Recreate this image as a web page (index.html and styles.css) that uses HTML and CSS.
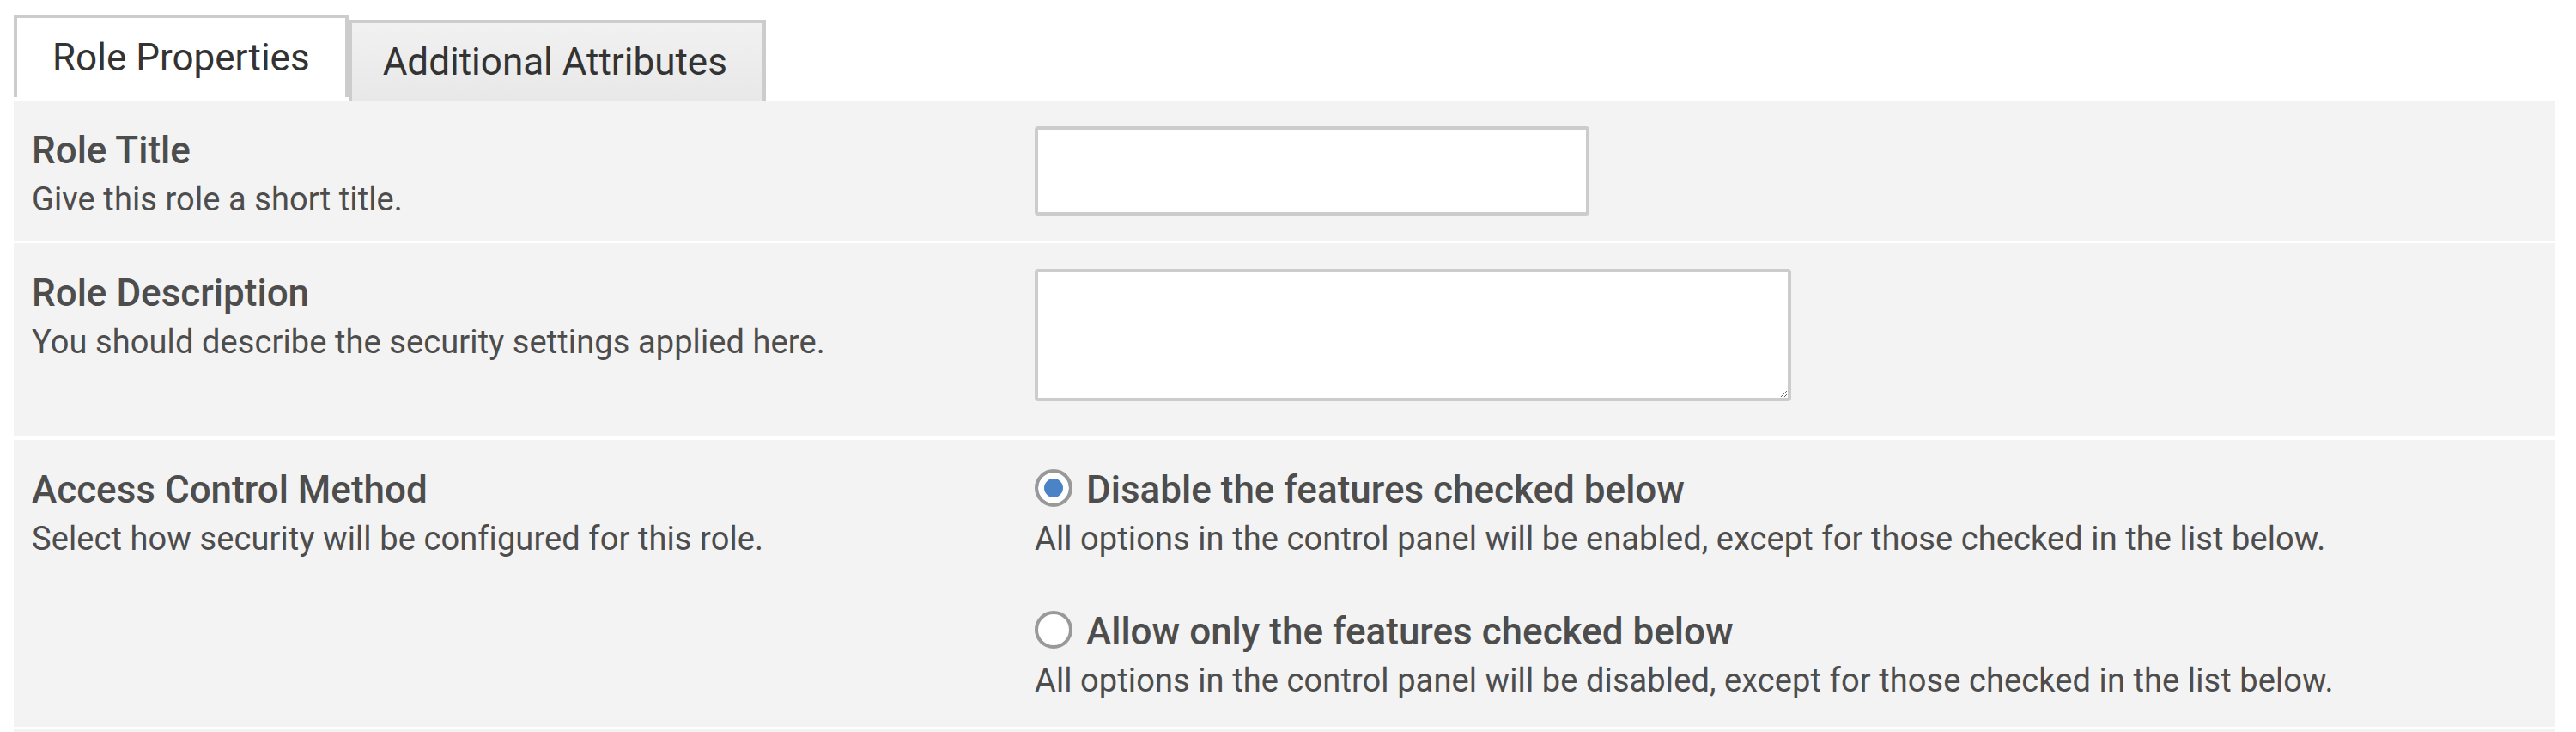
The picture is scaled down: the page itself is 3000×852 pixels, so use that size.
FILE: index.html
```html
<!DOCTYPE html>
<html lang="en">
<head>
  <meta charset="UTF-8" />
  <title>Role Properties</title>
  <link rel="stylesheet" href="styles.css">
</head>
<body>

  <!-- Tabs -->
  <div class="tabs">
    <div class="tab active">Role Properties</div>
    <div class="tab">Additional Attributes</div>
  </div>

  <!-- Properties panel -->
  <div class="panel">

    <div class="row">
      <div class="label-cell">
        <div class="label">Role Title</div>
        <div class="desc">Give this role a short title.</div>
      </div>
      <div class="field-cell">
        <input type="text" class="text-input" />
      </div>
    </div>

    <div class="row row-wide-gap">
      <div class="label-cell">
        <div class="label">Role Description</div>
        <div class="desc">You should describe the security settings applied here.</div>
      </div>
      <div class="field-cell">
        <textarea class="text-area"></textarea>
      </div>
    </div>

    <div class="row">
      <div class="label-cell">
        <div class="label">Access Control Method</div>
        <div class="desc">Select how security will be configured for this role.</div>
      </div>
      <div class="field-cell options">
        <label class="option">
          <input type="radio" name="method" checked />
          <span class="option-title">Disable the features checked below</span>
        </label>
        <div class="desc">All options in the control panel will be enabled, except for those checked in the list below.</div>

        <label class="option option-next">
          <input type="radio" name="method" />
          <span class="option-title">Allow only the features checked below</span>
        </label>
        <div class="desc">All options in the control panel will be disabled, except for those checked in the list below.</div>
      </div>
    </div>

    <div class="row row-end"></div>
  </div>

</body>
</html>
```

FILE: styles.css
```css
html, body {
  margin: 0;
  background: #fff;
  font-family: Roboto, 'Liberation Sans', sans-serif;
  color: #4d4d4d;
}

body {
  padding: 20px 24px 0 16px;
  overflow: hidden;
}

/* TABS */
.tabs {
  display: flex;
  align-items: flex-end;
  height: 97px;
}

.tab {
  font-size: 44px;
  line-height: 52px;
  color: #333;
  border: 4px solid #ccc;
  border-bottom: none;
  padding: 19px 41px 19px 36px;
  background: linear-gradient(#f1f1f1, #e8e8e8);
}

.tab.active {
  background: #fff;
  padding: 20px 41px;
  margin-bottom: 4px;
}

/* PANEL */
.panel {
  background: #fff;
}

.row {
  display: grid;
  grid-template-columns: 40% 1fr;
  background: #f3f3f3;
  margin-bottom: 2px;
}

.row-wide-gap {
  margin-bottom: 5px;
}

.row-end {
  height: 10px;
}

.label-cell {
  padding: 32px 0 20px 21px;
}

.label {
  font-size: 44px;
  line-height: 52px;
  font-weight: 500;
}

.desc {
  font-size: 38px;
  line-height: 46px;
  margin-top: 8px;
  letter-spacing: 0.1px;
}

.field-cell {
  padding: 30px 0 30px 5px;
}

.text-input {
  display: block;
  box-sizing: border-box;
  width: 646px;
  height: 104px;
  margin: 0;
  border: 4px solid #ccc;
  border-radius: 4px;
  background: #fff;
  outline: none;
}

.text-area {
  display: block;
  box-sizing: border-box;
  width: 881px;
  height: 154px;
  margin: 0 0 10px;
  border: 4px solid #ccc;
  border-radius: 4px;
  background: #fff;
  outline: none;
}

/* RADIO OPTIONS */
.options {
  padding-top: 32px;
  padding-bottom: 31px;
}

.option {
  display: flex;
  align-items: center;
  gap: 16px;
}

.option-next {
  margin-top: 59px;
}

.option-title {
  font-size: 44px;
  line-height: 52px;
  font-weight: 500;
}

.option input[type="radio"] {
  appearance: none;
  -webkit-appearance: none;
  box-sizing: border-box;
  width: 44px;
  height: 44px;
  margin: -4px 0 0;
  border: 4px solid #999;
  border-radius: 50%;
  background: #fff;
}

.option input[type="radio"]:checked {
  background: #4a84c6;
  box-shadow: inset 0 0 0 7px #fff;
}
```
